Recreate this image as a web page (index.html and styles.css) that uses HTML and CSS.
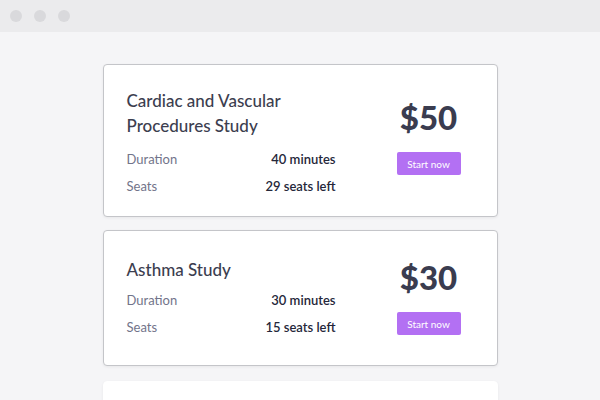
FILE: index.html
```html
<!DOCTYPE html>
<html lang="en">
  <head>
    <meta charset="UTF-8" />
    <meta name="viewport" content="width=device-width, initial-scale=1.0" />
    <title>Studies</title>
    <link rel="stylesheet" href="styles.css">
  </head>
  <body>
    <div class="window-bar">
      <span class="dot"></span>
      <span class="dot"></span>
      <span class="dot"></span>
    </div>

    <div class="page">
      <div class="card card-tall">
        <div class="info">
          <h2 class="title">Cardiac and Vascular<br>Procedures Study</h2>
          <div class="row">
            <span class="label">Duration</span>
            <span class="value">40 minutes</span>
          </div>
          <div class="row">
            <span class="label">Seats</span>
            <span class="value">29 seats left</span>
          </div>
        </div>
        <div class="action">
          <div class="price">$50</div>
          <button class="start-btn">Start now</button>
        </div>
      </div>

      <div class="card">
        <div class="info">
          <h2 class="title">Asthma Study</h2>
          <div class="row">
            <span class="label">Duration</span>
            <span class="value">30 minutes</span>
          </div>
          <div class="row">
            <span class="label">Seats</span>
            <span class="value">15 seats left</span>
          </div>
        </div>
        <div class="action">
          <div class="price">$30</div>
          <button class="start-btn">Start now</button>
        </div>
      </div>

      <div class="card card-empty"></div>
    </div>
  </body>
</html>
```

FILE: styles.css
```css
body {
  font-family: "Lato", "Noto Sans", sans-serif;
  margin: 0;
  padding: 0;
  background: #f5f5f7;
  height: 400px;
  overflow: hidden;
}

.window-bar {
  height: 32px;
  background: #ebebed;
  display: flex;
  align-items: center;
  gap: 12px;
  padding-left: 10px;
}

.dot {
  width: 12px;
  height: 12px;
  border-radius: 50%;
  background: #d9d9dc;
}

.page {
  width: 395px;
  margin: 0 auto;
  padding-top: 32px;
  display: flex;
  flex-direction: column;
  gap: 13px;
}

.card {
  background: #fff;
  border: 1px solid #c4c5c9;
  border-radius: 4px;
  box-shadow: 0 1px 3px rgba(0, 0, 0, 0.06);
  min-height: 136px;
  box-sizing: border-box;
  padding: 21px 36px 19px 23px;
  display: flex;
  align-items: center;
  justify-content: space-between;
}

.card-tall {
  padding-top: 23px;
  padding-bottom: 16px;
}

.action {
  margin-bottom: 6px;
}

.card-tall .action {
  margin-bottom: 16px;
}

.card-empty {
  border-color: #fff;
  margin-top: 2px;
}

.info {
  width: 209px;
}

.title {
  margin: 0 0 5px;
  font-size: 17px;
  font-weight: 500;
  line-height: 25px;
  color: #3c3e4f;
}

.card-tall .title {
  margin-bottom: 8px;
}

.row {
  display: flex;
  justify-content: space-between;
  font-size: 13px;
  line-height: 27px;
}

.label {
  color: #72748a;
}

.value {
  color: #25273a;
  font-weight: 600;
}

.action {
  width: 64px;
  display: flex;
  flex-direction: column;
  align-items: center;
}

.price {
  font-size: 33px;
  font-weight: 900;
  color: #3a3c4f;
  line-height: 40px;
  margin-bottom: 15px;
}

.start-btn {
  width: 64px;
  height: 23px;
  border: none;
  border-radius: 2px;
  background: #b370f3;
  color: #fff;
  font-family: inherit;
  font-size: 10px;
  padding: 0;
  cursor: pointer;
}
```
